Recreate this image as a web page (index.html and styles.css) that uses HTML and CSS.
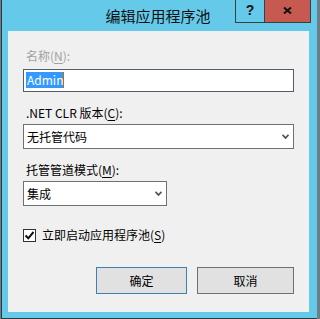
FILE: index.html
```html
<!DOCTYPE html>
<html lang="zh-CN">
<head>
<meta charset="utf-8">
<title>编辑应用程序池</title>
<link rel="stylesheet" href="styles.css">
</head>
<body>
<div class="window">
  <div class="titlebar">
    <div class="spacer"></div>
    <div class="title">编辑应用程序池</div>
    <div class="tb-btns">
      <div class="tb-btn help">?</div>
      <div class="tb-btn close">
        <svg width="9" height="7" viewBox="0 0 9 7"><path d="M1 0.5 L8 6.5 M8 0.5 L1 6.5" stroke="#111" stroke-width="2" fill="none"/></svg>
      </div>
    </div>
  </div>
  <div class="client">
    <div class="label disabled">名称(<u>N</u>):</div>
    <div class="textbox"><span class="sel">Admin</span><span class="caret"></span></div>

    <div class="label gap">.NET CLR 版本(<u>C</u>):</div>
    <div class="combo wide">
      <span class="combo-text">无托管代码</span>
      <svg class="chev" width="7" height="5" viewBox="0 0 7 5"><path d="M0.5 0.8 L3.5 4 L6.5 0.8" stroke="#555" stroke-width="1.8" fill="none"/></svg>
    </div>

    <div class="label gap">托管管道模式(<u>M</u>):</div>
    <div class="combo narrow">
      <span class="combo-text">集成</span>
      <svg class="chev" width="7" height="5" viewBox="0 0 7 5"><path d="M0.5 0.8 L3.5 4 L6.5 0.8" stroke="#555" stroke-width="1.8" fill="none"/></svg>
    </div>

    <div class="check-row">
      <div class="checkbox">
        <svg width="11" height="11" viewBox="0 0 11 11"><path d="M1.5 5.5 L4.3 8.3 L9.5 2" stroke="#111" stroke-width="2" fill="none"/></svg>
      </div>
      <span>立即启动应用程序池(<u>S</u>)</span>
    </div>

    <div class="buttons">
      <div class="btn ok">确定</div>
      <div class="btn cancel">取消</div>
    </div>
  </div>
</div>
</body>
</html>
```
FILE: styles.css
```css
html, body {
  margin: 0;
  padding: 0;
}
body {
  width: 317px;
  height: 319px;
  background: #6f7d86;
  overflow: hidden;
  font-family: "Noto Sans CJK SC", "Noto Sans", sans-serif;
  font-size: 12px;
  color: #000;
}
.window {
  margin-left: 1px;
  width: 316px;
  height: 319px;
  box-sizing: border-box;
  border-left: 1px solid #2c3a43;
  border-bottom: 1px solid #2c3a43;
  background: #65c9ea;
  display: flex;
  flex-direction: column;
}
.titlebar {
  height: 31px;
  flex: none;
  display: grid;
  grid-template-columns: 1fr auto 1fr;
}
.title {
  font-size: 15px;
  line-height: 31px;
  color: #111;
  padding-right: 3px;
}
.tb-btns {
  justify-self: end;
  margin-right: 6px;
  display: flex;
  height: 23px;
}
.tb-btn {
  box-sizing: border-box;
  height: 23px;
  border: 1px solid #3a3f44;
  border-top: none;
  display: flex;
  align-items: center;
  justify-content: center;
}
.help {
  width: 30px;
  font-family: "Liberation Sans", sans-serif;
  font-weight: bold;
  font-size: 14px;
  color: #111;
  padding-bottom: 2px;
}
.close {
  width: 47px;
  margin-left: -1px;
  background: #c65a50;
  padding-bottom: 1px;
}
.client {
  flex: 1;
  margin: 0 8px 6px 6px;
  background: #f0f0f0;
  padding: 17px 15px 0 15px;
  display: flex;
  flex-direction: column;
  align-items: flex-start;
}
.label {
  line-height: 16px;
  margin-left: 3px;
  white-space: nowrap;
}
.label.gap {
  margin-top: 13px;
}
.disabled {
  color: #a2a2a2;
}
u {
  text-decoration-thickness: 1px;
  text-underline-offset: 2px;
}
.textbox {
  margin-top: 5px;
  box-sizing: border-box;
  width: 271px;
  height: 23px;
  border: 1px solid #4f5d6c;
  background: #fff;
  padding: 2px 0 0 2px;
  display: flex;
  align-items: flex-start;
}
.sel {
  background: #3399ff;
  color: #fff;
  line-height: 16px;
  height: 16px;
  padding: 0 1px;
}
.caret {
  width: 1px;
  height: 16px;
  background: #cc6600;
  margin-left: -1px;
}
.combo {
  margin-top: 3px;
  box-sizing: border-box;
  height: 25px;
  border: 1px solid #707070;
  background: #fff;
  display: flex;
  align-items: center;
  justify-content: space-between;
  padding: 0 4px 0 3px;
}
.combo.wide {
  width: 271px;
}
.combo.narrow {
  width: 144px;
}
.combo-text {
  line-height: 16px;
}
.chev {
  display: block;
}
.check-row {
  margin-top: 21px;
  display: flex;
  align-items: center;
  line-height: 16px;
}
.checkbox {
  box-sizing: border-box;
  width: 13px;
  height: 13px;
  border: 1px solid #333;
  background: #fff;
  margin-right: 6px;
  display: flex;
  align-items: center;
  justify-content: center;
}
.checkbox svg {
  display: block;
}
.buttons {
  margin-top: 24px;
  align-self: stretch;
  display: flex;
  justify-content: flex-end;
  gap: 10px;
}
.btn {
  box-sizing: border-box;
  height: 27px;
  background: #e1e1e1;
  border: 1px solid #707070;
  display: flex;
  align-items: center;
  justify-content: center;
  line-height: 16px;
}
.btn.ok {
  width: 91px;
  border-color: #3c7fb1;
}
.btn.cancel {
  width: 97px;
}
```
